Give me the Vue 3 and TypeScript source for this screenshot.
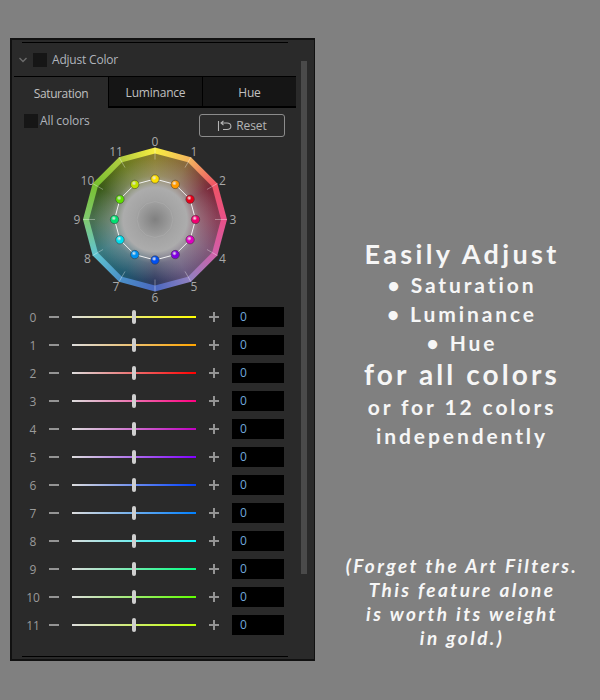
<script setup lang="ts">
const labels = Array.from({ length: 12 }, (_, i) => i);

const dotColors = ['#ffe000', '#ff9a00', '#e8001a', '#f00070', '#e000c0', '#8000e0', '#0050f0', '#0090f0', '#00e0f0', '#00e070', '#60e000', '#c0e000'];
const trackColors = ['#ffff00', '#ffa500', '#ff0000', '#ff0080', '#c000c0', '#8000ff', '#0040ff', '#0080ff', '#00ffff', '#00ff80', '#60ff00', '#c0ff00'];
const ringColors = ['#f8ee40', '#f2b45e', '#ee5566', '#e85088', '#d060a8', '#9080c0', '#4a68c0', '#4a90c8', '#60c4d0', '#80c870', '#78c030', '#b0cc40'];
const fillColors = ['#8c8030', '#8a6a40', '#7a2a3a', '#8a4058', '#805878', '#6a5a80', '#303a60', '#205a70', '#3a7a80', '#4a7050', '#3a5a18', '#6a7a20'];

const cx = 85;
const cy = 82.5;

function point(i: number, r: number) {
  const a = ((i * 30 - 90) * Math.PI) / 180;
  return { x: cx + r * Math.cos(a), y: cy + r * Math.sin(a) };
}

function poly(r: number) {
  return labels.map((i) => { const p = point(i, r); return `${p.x.toFixed(2)},${p.y.toFixed(2)}`; }).join(' ');
}

function clip(r: number) {
  const pts = labels.map((i) => { const p = point(i, r); return `${p.x.toFixed(2)}px ${p.y.toFixed(2)}px`; });
  return `polygon(${pts.join(', ')})`;
}

function conic(colors: string[]) {
  const stops = [...colors, colors[0]].map((c, i) => `${c} ${i * 30}deg`);
  return `conic-gradient(from 0deg at ${cx}px ${cy}px, ${stops.join(', ')})`;
}

const ringStyle = { background: conic(ringColors), clipPath: clip(72) };
const fillStyle = { background: conic(fillColors), clipPath: clip(66) };

function labelStyle(i: number) {
  const p = point(i, 78);
  return { left: `${p.x}px`, top: `${p.y}px` };
}

function trackStyle(i: number) {
  return { background: `linear-gradient(90deg, #dcdcdc 0%, ${trackColors[i]} 100%)` };
}
</script>

<template>
  <div class="page">
    <section class="panel">
      <div class="scrollbar"></div>
      <div class="rule"></div>
      <header class="head">
        <svg class="chevron" width="8" height="6" viewBox="0 0 8 6">
          <path d="M.5 1l3.5 3.5L7.5 1" fill="none" stroke="#6c6c6c" stroke-width="1.4" />
        </svg>
        <span class="check"></span>
        <span class="head__title">Adjust Color</span>
      </header>

      <div class="tabs">
        <div class="tab tab--active">Saturation</div>
        <div class="tab">Luminance</div>
        <div class="tab">Hue</div>
      </div>

      <div class="options">
        <label class="all">
          <span class="check"></span>
          <span>All colors</span>
        </label>
        <button class="reset">
          <svg width="15" height="12" viewBox="0 0 15 12">
            <path d="M1.5 1v10M10 3H4M6.5 .8 4 3l2.5 2.2M10 3c5.2 0 5.2 6.5 0 6.5H6" fill="none" stroke="#b4b4b4" stroke-width="1.1" />
          </svg>
          Reset
        </button>
      </div>

      <div class="wheel">
        <div class="wheel__layer" :style="ringStyle"></div>
        <div class="wheel__layer" :style="fillStyle"></div>
        <div class="wheel__layer wheel__glow" :style="{ clipPath: fillStyle.clipPath }"></div>
        <svg class="wheel__layer" width="170" height="165" viewBox="0 0 170 165">
          <defs>
            <radialGradient v-for="i in labels" :id="`dot${i}`" :key="i" cx="40%" cy="35%" r="70%">
              <stop offset="0" stop-color="#fff" stop-opacity=".75" />
              <stop offset=".4" :stop-color="dotColors[i]" />
              <stop offset="1" :stop-color="dotColors[i]" />
            </radialGradient>
          </defs>
          <line
            v-for="i in labels"
            :key="`t${i}`"
            :x1="point(i, 72).x"
            :y1="point(i, 72).y"
            :x2="point(i, 60).x"
            :y2="point(i, 60).y"
            stroke="#fff"
            stroke-opacity=".35"
            stroke-width="1"
          />
          <polygon :points="poly(18)" fill="none" stroke="#a8a8a8" stroke-width="1" />
          <polygon :points="poly(40.5)" fill="none" stroke="#f2f2f2" stroke-width="1" />
          <circle
            v-for="i in labels"
            :key="`d${i}`"
            :cx="point(i, 40.5).x"
            :cy="point(i, 40.5).y"
            r="4.2"
            :fill="`url(#dot${i})`"
            stroke="#333"
            stroke-width=".5"
          />
        </svg>
        <span v-for="i in labels" :key="`l${i}`" class="wheel__label" :style="labelStyle(i)">{{ i }}</span>
      </div>

      <div class="rows">
        <div v-for="i in labels" :key="i" class="row">
          <span class="row__num">{{ i }}</span>
          <span class="row__minus"></span>
          <div class="slider">
            <div class="slider__track" :style="trackStyle(i)"></div>
            <div class="slider__thumb"></div>
          </div>
          <span class="row__plus"></span>
          <div class="row__input">0</div>
        </div>
      </div>

      <div class="rule rule--bottom"></div>
    </section>

    <aside class="copy">
      <div class="copy__main">
        <div class="l l--title">Easily Adjust</div>
        <div class="l l--item">• Saturation</div>
        <div class="l l--item">• Luminance</div>
        <div class="l l--item">• Hue</div>
        <div class="l l--big">for all colors</div>
        <div class="l l--sub">or for 12 colors</div>
        <div class="l l--sub">independently</div>
      </div>
      <div class="copy__note">
        <div>(Forget the Art Filters.</div>
        <div>This feature alone</div>
        <div>is worth its weight</div>
        <div>in gold.)</div>
      </div>
    </aside>
  </div>
</template>

<style>
html,
body {
  margin: 0;
  background: #808080;
}
</style>

<style scoped>
.page {
  display: flex;
  width: 600px;
  height: 700px;
  box-sizing: border-box;
  padding: 38px 0 0 10px;
  background: #808080;
  font-family: "Open Sans", "Noto Sans", sans-serif;
  overflow: hidden;
}

.panel {
  position: relative;
  flex: none;
  display: flex;
  flex-direction: column;
  width: 305px;
  height: 623px;
  box-sizing: border-box;
  border: 2px solid #111;
  border-right-width: 1px;
  border-bottom-width: 2px;
  background: #2a2a2a;
  color: #b4b4b4;
}

.scrollbar {
  position: absolute;
  left: 289px;
  top: 21px;
  width: 6px;
  height: 513px;
  background: #4a4a4a;
}

.rule {
  flex: none;
  height: 1px;
  margin: 2px 0 0 10px;
  width: 266px;
  background: #000;
}

.rule--bottom {
  margin-top: auto;
  margin-bottom: 2px;
}

.head {
  display: flex;
  align-items: center;
  height: 33px;
  padding-left: 7px;
  font-size: 12px;
}

.chevron {
  margin-right: 6px;
}

.check {
  flex: none;
  display: block;
  width: 14px;
  height: 14px;
  background: #161616;
}

.head__title {
  margin-left: 5px;
  color: #b0b4bc;
  letter-spacing: -0.2px;
}

.tabs {
  display: grid;
  grid-template-columns: 94px 94px 94px;
  width: 282px;
  height: 32px;
  margin-left: 2px;
  box-sizing: border-box;
  border-top: 1px solid #000;
  border-right: 1px solid #000;
}

.tab {
  display: flex;
  align-items: center;
  justify-content: center;
  padding-top: 2px;
  background: #151515;
  border-left: 1px solid #000;
  border-bottom: 2px solid #000;
  font-size: 12px;
  color: #c0c0c0;
  letter-spacing: -0.2px;
}

.tab--active {
  background: #2a2a2a;
  border-left: 0;
  border-bottom: 0;
  letter-spacing: -0.4px;
}

.options {
  display: flex;
  justify-content: space-between;
  align-items: flex-start;
  height: 29px;
  padding: 4px 27px 0 12px;
  box-sizing: border-box;
}

.all {
  display: flex;
  align-items: center;
  gap: 2px;
  font-size: 12px;
  letter-spacing: -0.1px;
  color: #b0b4bc;
}

.reset {
  display: flex;
  align-items: center;
  justify-content: center;
  gap: 4px;
  width: 86px;
  height: 23px;
  margin-top: 2px;
  margin-right: 2px;
  padding: 0;
  border: 1px solid #8c8c8c;
  border-radius: 3px;
  background: #2c2c2c;
  color: #b4b4b4;
  font: 12px "Open Sans", sans-serif;
  letter-spacing: -0.1px;
}

.wheel {
  position: relative;
  flex: none;
  width: 170px;
  height: 165px;
  margin-left: 58px;
}

.wheel__layer {
  position: absolute;
  inset: 0;
}

.wheel__glow {
  background: radial-gradient(circle at 85px 82.5px, #808080 0, #a4a4a4 20px, #acacac 32px, rgba(170, 170, 170, 0.4) 44px, rgba(170, 170, 170, 0) 62px);
}

.wheel__label {
  position: absolute;
  transform: translate(-50%, -50%);
  font-size: 12px;
  line-height: 1;
  color: #a8a8a8;
}

.rows {
  margin-top: 1px;
  margin-left: 10px;
}

.row {
  display: grid;
  grid-template-columns: 22px 28px 124px 36px 52px;
  align-items: center;
  height: 28px;
}

.row__num {
  text-align: center;
  font-size: 12px;
  color: #9a9a9a;
}

.row__minus {
  display: block;
  width: 10px;
  height: 2px;
  margin-left: 5px;
  background: #949494;
}

.row__plus {
  position: relative;
  display: block;
  width: 10px;
  height: 10px;
  margin-left: 13px;
  background:
    linear-gradient(#949494, #949494) center / 10px 2px no-repeat,
    linear-gradient(#949494, #949494) center / 2px 10px no-repeat;
}

.slider {
  position: relative;
  height: 14px;
  display: flex;
  align-items: center;
}

.slider__track {
  width: 100%;
  height: 2px;
}

.slider__thumb {
  position: absolute;
  left: 60px;
  top: 0;
  width: 4px;
  height: 14px;
  border-radius: 2px;
  background: #cfcfcf;
}

.row__input {
  height: 20px;
  padding-left: 8px;
  background: #000;
  color: #6fa8dc;
  font-size: 12px;
  line-height: 20px;
  box-sizing: border-box;
}

.copy {
  flex: none;
  display: flex;
  flex-direction: column;
  width: 280px;
  margin-left: 7px;
  font-family: Lato, "Open Sans", sans-serif;
  font-weight: 700;
  color: #f6f6f6;
  text-align: center;
}

.copy__main {
  padding-top: 199px;
}

.l--title {
  font-size: 27px;
  letter-spacing: 3.35px;
  line-height: 33px;
}

.l--item {
  font-size: 21px;
  letter-spacing: 2.9px;
  line-height: 29px;
}

.l--big {
  font-size: 28px;
  letter-spacing: 3.1px;
  line-height: 35px;
}

.l--sub {
  font-size: 21px;
  letter-spacing: 2.9px;
  line-height: 29px;
}

.copy__note {
  margin-top: 104px;
  font-size: 19px;
  font-style: italic;
  letter-spacing: 2.4px;
  line-height: 24px;
}
</style>
